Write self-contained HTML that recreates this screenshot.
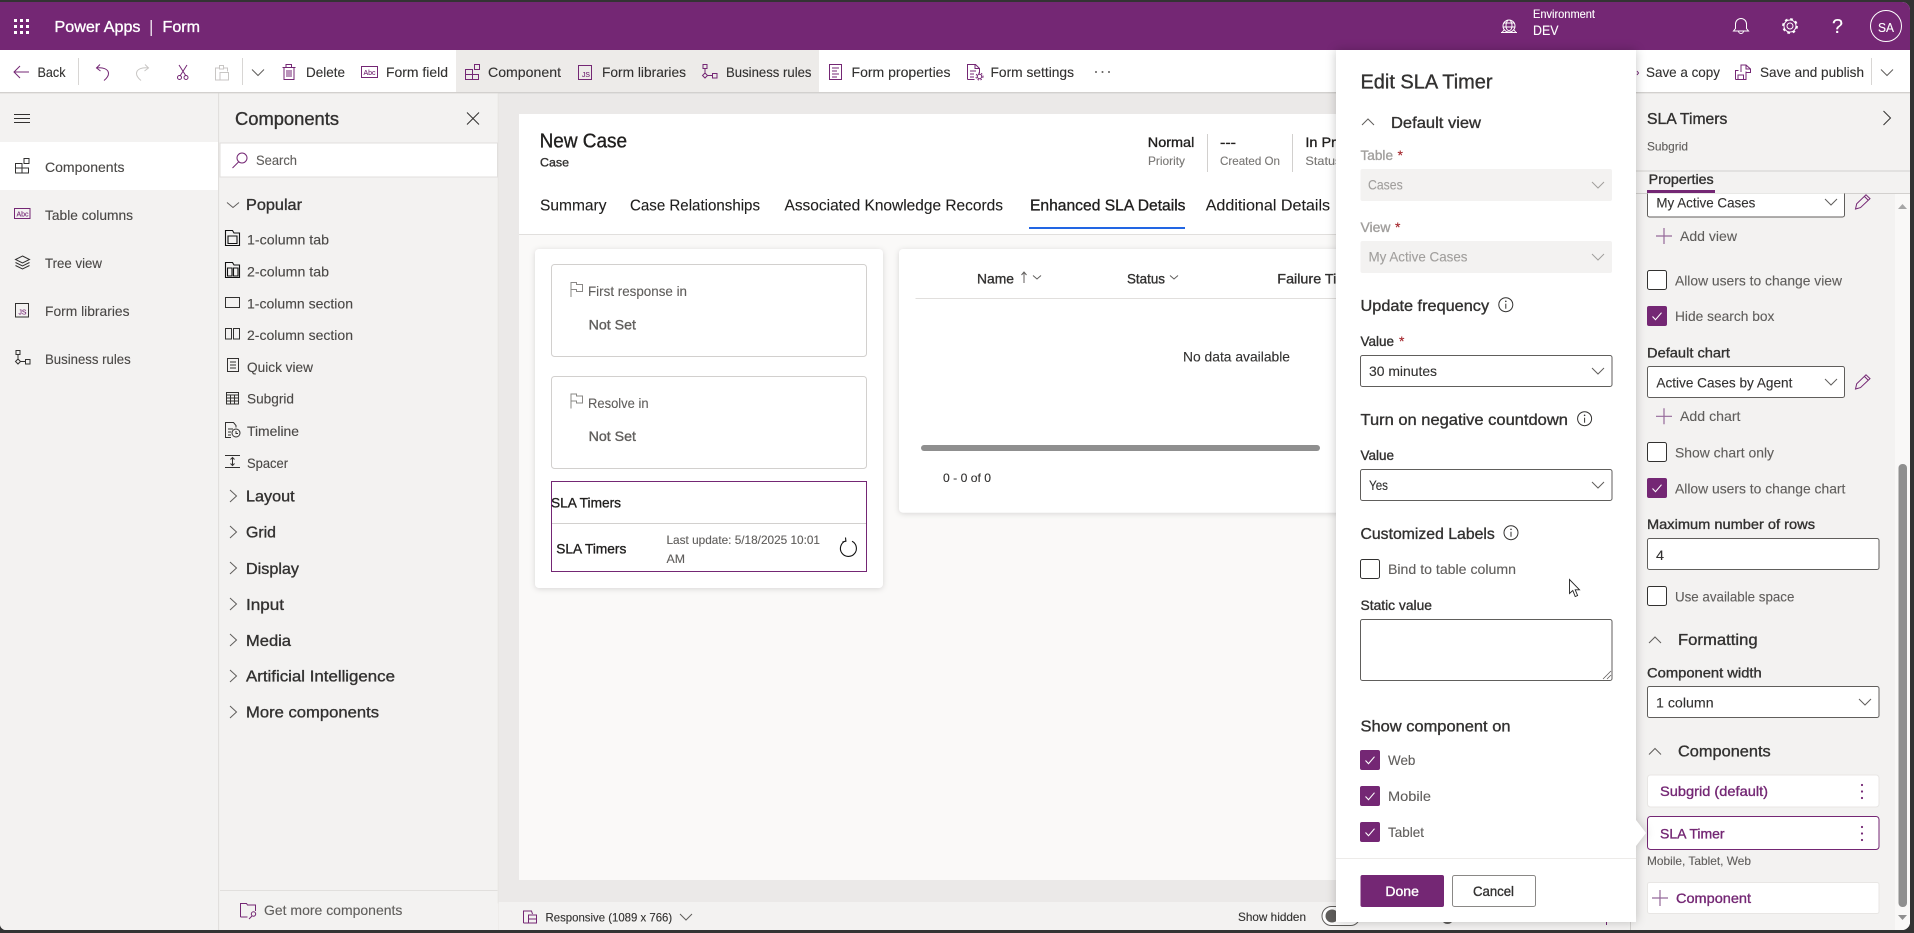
<!DOCTYPE html>
<html lang="en"><head><meta charset="utf-8"><title>Power Apps | Form</title>
<style>
html,body{margin:0;padding:0;width:1914px;height:933px;overflow:hidden;background:#333}
svg{display:block;font-family:"Liberation Sans",sans-serif}
text{fill:currentColor;stroke:currentColor;stroke-width:.12px;white-space:pre;color:#323130;font-size:14px}
.sb{stroke:currentColor;stroke-width:.35px}
.s12{font-size:12px}.s16{font-size:16px}.s18{font-size:18px}.s20{font-size:20px}
.g{color:#605e5c}.i{color:#4a4846}.d{color:#a19f9d}.k{color:#201f1e}.w{color:#fff}.p{color:#742774}.m{color:#797775}.r{color:#a4262c}
.ip{fill:none;stroke:#742774;stroke-width:1}
.id{fill:none;stroke:#323130;stroke-width:1}
.ik{fill:none;stroke:#111;stroke-width:1.1}
.ig{fill:none;stroke:#c8c6c4;stroke-width:1}
.iw{fill:none;stroke:#fff;stroke-width:1}
.ch{fill:none;stroke:#605e5c;stroke-width:1}
.cd{fill:none;stroke:#a19f9d;stroke-width:1}
.pl{fill:none;stroke:#95699a;stroke-width:1.2}
.box{fill:#fff;stroke:#605e5c;stroke-width:1}
.cb{fill:#fff;stroke:#323130;stroke-width:1}
</style></head><body>
<svg width="1914" height="933" viewBox="0 0 1914 933" xmlns="http://www.w3.org/2000/svg">
<defs>
<clipPath id="win"><path d="M0 2H1902a8 8 0 0 1 8 8V922a8 8 0 0 1-8 8H6a6 6 0 0 1-6-6z"/></clipPath>
<clipPath id="clipProps"><rect x="1636" y="193.5" width="260" height="740"/></clipPath>
<g id="cbon"><rect x="0" y="0" width="20" height="20" rx="2" fill="#742774"/><path d="M5.5 10.5l3 3.2 6-7" fill="none" stroke="#fff" stroke-width="1.1"/></g>
<g id="cboff"><rect x=".5" y=".5" width="19" height="19" rx="2" class="cb"/></g>
<g id="kebab"><circle cx="0" cy="0" r="1.1" fill="#742774"/><circle cx="0" cy="6.5" r="1.1" fill="#742774"/><circle cx="0" cy="13" r="1.1" fill="#742774"/></g>
<g id="info"><circle cx="0" cy="0" r="7" fill="none" stroke="#323130"/><path d="M0-1v5" stroke="#323130"/><circle cx="0" cy="-3.4" r=".8" fill="#323130"/></g>
<g id="flag"><path d="M.5 15V.5h5.5v2h6v7h-6v-2H.5" fill="none" stroke="#8a8886"/></g>
<g id="pencil"><path d="M1 15l1.2-5.2L11.5 .8l4 3.8L6 13.6z M10 2.5l4 4" fill="none" stroke="#742774"/></g>
</defs>
<rect width="1914" height="933" fill="#333"/>
<g clip-path="url(#win)">
<!-- base -->
<rect y="2" width="1914" height="931" fill="#ebe9e8"/>
<rect y="2" width="1914" height="48" fill="#742774"/>
<rect y="50" width="1914" height="43" fill="#fff"/>
<rect x="456" y="50" width="363" height="43" fill="#edebe9"/>
<rect y="92" width="1914" height="1.4" fill="#d2d0ce"/>
<!-- header -->
<g fill="#fff"><rect x="14" y="19" width="3" height="3"/><rect x="20" y="19" width="3" height="3"/><rect x="26" y="19" width="3" height="3"/><rect x="14" y="25" width="3" height="3"/><rect x="20" y="25" width="3" height="3"/><rect x="26" y="25" width="3" height="3"/><rect x="14" y="31" width="3" height="3"/><rect x="20" y="31" width="3" height="3"/><rect x="26" y="31" width="3" height="3"/></g>
<text x="54.5" y="32" textLength="86" lengthAdjust="spacingAndGlyphs" class="s16 w sb">Power Apps</text>
<rect x="150.6" y="20" width="1.2" height="16" fill="#fff"/>
<text x="162.5" y="32" textLength="37.5" lengthAdjust="spacingAndGlyphs" class="s16 w sb">Form</text>
<path class="iw" d="M1503 26a6 6 0 1 1 12 0M1503 26a6 6 0 0 0 12 0M1506 26c0-8 6-8 6 0M1506 26c0 6 6 6 6 0M1503.5 23h11M1503.5 27h11M1501 32.5h16M1504 30l-2 2.5M1514 30l2 2.5"/>
<text x="1533" y="18" textLength="62" lengthAdjust="spacingAndGlyphs" class="s12 w">Environment</text>
<text x="1533" y="35" textLength="25.5" lengthAdjust="spacingAndGlyphs" class="w">DEV</text>
<path class="iw" d="M1741 18.5a5.5 5.5 0 0 0-5.5 5.5v4.5l-2 2.5h15l-2-2.5V24a5.5 5.5 0 0 0-5.5-5.5zM1738.5 31a2.5 2.5 0 0 0 5 0"/>
<circle cx="1790" cy="26" r="3" class="iw"/><circle cx="1790" cy="26" r="6" class="iw"/><circle cx="1790" cy="26" r="7" fill="none" stroke="#fff" stroke-width="1.8" stroke-dasharray="2.7 2.8"/>
<text x="1832" y="33" textLength="11" lengthAdjust="spacingAndGlyphs" class="s20 w">?</text>
<circle cx="1886" cy="26" r="15.5" class="iw"/>
<text x="1878" y="32" textLength="16" lengthAdjust="spacingAndGlyphs" class="w" style="font-size:13px">SA</text>
<!-- toolbar -->
<path class="ip" d="M29 72H14M20 66l-6 6 6 6"/>
<text x="37.5" y="77" textLength="28" lengthAdjust="spacingAndGlyphs">Back</text>
<rect x="78" y="58" width="1" height="27" fill="#d8d6d4"/>
<path class="ip" d="M100 64.5l-3.5 3.5 4 3M96.5 68c6-1 12 1 12 5.5 0 3-2 5-4.5 7"/>
<path class="ig" d="M145 64.5l3.5 3.5-4 3M148.5 68c-6-1-12 1-12 5.5 0 3 2 5 4.5 7"/>
<path class="ip" d="M179 65l7 11M187 65l-7 11"/><circle cx="179.5" cy="77.5" r="2" class="ip"/><circle cx="186" cy="77.5" r="2" class="ip"/>
<path class="ig" d="M219 68h-3.5v12h4M224 68h3.5v3.5M219.5 65.5h4v3.5h-4zM220 72.5h8.5v7.5H220z"/>
<rect x="242" y="58" width="1" height="27" fill="#d8d6d4"/>
<path class="ch" d="M252 69.5l6 6 6-6"/>
<path class="ip" d="M282.5 67.5h13M286 67.5v-3h5.5v3M284 67.5h10v12h-10zM287 70v7M289 70v7M291 70v7"/>
<text x="306" y="77" textLength="39" lengthAdjust="spacingAndGlyphs">Delete</text>
<rect x="361.5" y="66.5" width="16" height="11" class="ip"/><text x="363.5" y="75" textLength="12" lengthAdjust="spacingAndGlyphs" class="p" style="font-size:7px">Abc</text>
<text x="386" y="77" textLength="62" lengthAdjust="spacingAndGlyphs">Form field</text>
<path class="ip" d="M465.5 69.5h7v10h-7zM465.5 74.5h13v5h-6M474.5 64.5h5v5h-5z"/>
<text x="488" y="77" textLength="73" lengthAdjust="spacingAndGlyphs">Component</text>
<rect x="578.5" y="65.5" width="13" height="14" class="ip"/><text x="582" y="77" textLength="8" lengthAdjust="spacingAndGlyphs" class="p" style="font-size:7px">JS</text>
<text x="602" y="77" textLength="84" lengthAdjust="spacingAndGlyphs">Form libraries</text>
<path class="ip" d="M703 64.5h4v4h-4zM705 68.5V73M705 73l2.5 2.5-2.5 2.5-2.5-2.5zM707.5 75.5h5M712.5 73.5h4.500v4.5h-4.5z"/>
<text x="726" y="77" textLength="85.500" lengthAdjust="spacingAndGlyphs">Business rules</text>
<path class="ip" d="M829.5 64.5h12v15h-12zM832 68h7M832 71h5M832 74h7M832 77h5"/>
<text x="851.5" y="77" textLength="99" lengthAdjust="spacingAndGlyphs">Form properties</text>
<path class="ip" d="M967.5 79.5v-15h8l4 4v5M975 64.5v4h4M970 71h6M970 74h4M970 77h4M967.5 79.5h7"/><circle cx="979.5" cy="76.5" r="2.2" class="ip"/><circle cx="979.5" cy="76.5" r="3.5" fill="none" stroke="#742774" stroke-dasharray="1.5 1.5"/>
<text x="990.5" y="77" textLength="83.5" lengthAdjust="spacingAndGlyphs">Form settings</text>
<g fill="#605e5c"><circle cx="1096" cy="72" r="1"/><circle cx="1102.5" cy="72" r="1"/><circle cx="1109" cy="72" r="1"/></g>
<path class="ip" d="M1637 71l1.5 2-1.5 2"/>
<text x="1646" y="77" textLength="74" lengthAdjust="spacingAndGlyphs">Save a copy</text>
<path class="ip" d="M1735.5 79.5v-9h3M1735.5 79.5h10.5v-8M1738 75h5.5v4.5H1738zM1741 72v-7h5l4.5 4v3.5H1746M1746 65v4h4.5"/>
<text x="1760" y="77" textLength="104" lengthAdjust="spacingAndGlyphs">Save and publish</text>
<rect x="1871" y="58" width="1" height="27" fill="#d8d6d4"/>
<path class="ch" d="M1881 69.5l6 6 6-6"/>
<!-- left nav -->
<rect x="0" y="93.4" width="218" height="840" fill="#f3f2f1"/>
<rect x="218" y="93.4" width="1.2" height="840" fill="#e1dfdd"/>
<path class="id" d="M14 114.5h16M14 118.500h16M14 122.500h16"/>
<rect x="0" y="142" width="218" height="48" fill="#fff"/>
<path class="id" d="M15.5 163.5h6.5v9.5h-6.5zM15.5 168h13v5h-6.5M24 158.5h5v5h-5zM22 163.5v4.5"/>
<text x="45" y="172" textLength="79.5" lengthAdjust="spacingAndGlyphs" class="i">Components</text>
<rect x="14.5" y="208.5" width="15.5" height="10" class="ip"/><text x="16.5" y="216.5" textLength="12" lengthAdjust="spacingAndGlyphs" class="p" style="font-size:7px">Abc</text>
<text x="45" y="220" textLength="88" lengthAdjust="spacingAndGlyphs" class="i">Table columns</text>
<path class="id" d="M22.5 256l7 3.5-7 3.5-7-3.5zM15.5 262.5l7 3.5 7-3.5M15.5 265.5l7 3.5 7-3.5"/>
<text x="45" y="268" textLength="57" lengthAdjust="spacingAndGlyphs" class="i">Tree view</text>
<rect x="15.5" y="303.5" width="13" height="13.5" class="id"/><text x="18.5" y="314.5" textLength="8" lengthAdjust="spacingAndGlyphs" class="p" style="font-size:7px">JS</text>
<text x="45" y="316" textLength="84.5" lengthAdjust="spacingAndGlyphs" class="i">Form libraries</text>
<path class="id" d="M16 350.5h4v4h-4zM18 354.5V359M18 359l2.5 2.5-2.5 2.5-2.5-2.5zM20.5 361.5h5M25.5 359.5h4.5v4.5h-4.5z"/>
<text x="45" y="364" textLength="85.7" lengthAdjust="spacingAndGlyphs" class="i">Business rules</text>
<!-- components panel -->
<rect x="219.2" y="93.4" width="278.8" height="840" fill="#f3f2f1"/>
<rect x="497.7" y="93.4" width="1" height="810" fill="#e6e4e2"/>
<text x="235" y="125" textLength="104" lengthAdjust="spacingAndGlyphs" class="s18 sb">Components</text>
<path class="id" d="M467 112.5l12 12M479 112.5l-12 12"/>
<rect x="220" y="143" width="277.5" height="34" fill="#fff" stroke="#e1dfdd"/>
<circle cx="242" cy="158" r="5" class="ip"/><path class="ip" d="M238.5 162l-6 6"/>
<text x="256" y="165" textLength="41" lengthAdjust="spacingAndGlyphs" class="g">Search</text>
<path class="ch" d="M227 202.5l6 5 6-5"/>
<text x="246" y="210" textLength="56" lengthAdjust="spacingAndGlyphs" class="s16 sb">Popular</text>
<path class="ik" d="M225.5 245.5v-15h7l1.5 2.500h5.500v12.500zM228 236h9v7.500h-9z"/>
<text x="247" y="244.3" textLength="82" lengthAdjust="spacingAndGlyphs" class="i">1-column tab</text>
<path class="ik" d="M225.5 277.5v-15h7l1.5 2.5h5.5v12.5zM227.5 268h4.5v8h-4.5zM233.5 268h4.5v8h-4.5z"/>
<text x="247" y="276.3" textLength="82" lengthAdjust="spacingAndGlyphs" class="i">2-column tab</text>
<rect x="225.5" y="297.5" width="14" height="10" class="id"/>
<text x="247" y="308.3" textLength="106" lengthAdjust="spacingAndGlyphs" class="i">1-column section</text>
<path class="id" d="M225.5 328.5h6v10.5h-6zM233.5 328.5h6v10.5h-6z"/>
<text x="247" y="340" textLength="106" lengthAdjust="spacingAndGlyphs" class="i">2-column section</text>
<path class="id" d="M227.5 358.5h11v13h-11zM230 362h6M230 365h6M230 368h6"/>
<text x="247" y="372" textLength="66" lengthAdjust="spacingAndGlyphs" class="i">Quick view</text>
<path class="id" d="M226.5 392.5h12v11.5h-12zM226.5 395h12M226.5 398h12M226.5 401h12M230.5 395v9M234.5 395v9"/>
<text x="247" y="403.5" textLength="47" lengthAdjust="spacingAndGlyphs" class="i">Subgrid</text>
<path class="id" d="M231 437.5h-5.5v-15h8l2.5 3v2M228 429h5M228 432h3M228 435h3"/><circle cx="236" cy="433" r="4" class="id"/><path class="id" d="M236 431v2.5h2"/>
<text x="247" y="436" textLength="52" lengthAdjust="spacingAndGlyphs" class="i">Timeline</text>
<path class="id" d="M225 455.5h15M225 467.5h15M232.5 458v7M230.5 459.5l2-2 2 2M230.5 463.5l2 2 2-2"/>
<text x="247" y="468" textLength="41" lengthAdjust="spacingAndGlyphs" class="i">Spacer</text>
<path class="ch" d="M230 490l6.5 6-6.5 6"/>
<text x="246" y="501.7" textLength="48.6" lengthAdjust="spacingAndGlyphs" class="s16 sb">Layout</text>
<path class="ch" d="M230 526l6.5 6-6.5 6"/>
<text x="246" y="537.7" textLength="30" lengthAdjust="spacingAndGlyphs" class="s16 sb">Grid</text>
<path class="ch" d="M230 562l6.5 6-6.5 6"/>
<text x="246" y="574" textLength="53" lengthAdjust="spacingAndGlyphs" class="s16 sb">Display</text>
<path class="ch" d="M230 598l6.5 6-6.5 6"/>
<text x="246" y="610" textLength="38" lengthAdjust="spacingAndGlyphs" class="s16 sb">Input</text>
<path class="ch" d="M230 634l6.5 6-6.5 6"/>
<text x="246" y="646" textLength="45" lengthAdjust="spacingAndGlyphs" class="s16 sb">Media</text>
<path class="ch" d="M230 670l6.5 6-6.5 6"/>
<text x="246" y="681.7" textLength="149" lengthAdjust="spacingAndGlyphs" class="s16 sb">Artificial Intelligence</text>
<path class="ch" d="M230 706l6.5 6-6.5 6"/>
<text x="246" y="717.7" textLength="133" lengthAdjust="spacingAndGlyphs" class="s16 sb">More components</text>
<rect x="220" y="890" width="277.5" height="1" fill="#e1dfdd"/>
<path class="ip" d="M240.5 917v-13.500h6l1 1.500h8v6M240.5 917h7"/><circle cx="253.5" cy="914" r="2.2" class="ip"/><path class="ip" d="M252 916l-3 3"/>
<text x="264" y="915" textLength="138.4" lengthAdjust="spacingAndGlyphs" class="g">Get more components</text>
<!-- form -->
<rect x="519" y="114" width="900" height="766" fill="#faf9f8"/>
<rect x="519" y="114" width="900" height="120" fill="#fff"/>
<rect x="519" y="234" width="900" height="1" fill="#e1dfdd"/>
<text x="539.6" y="147.7" textLength="87.5" lengthAdjust="spacingAndGlyphs" class="s20 sb k">New Case</text>
<text x="540" y="166.7" textLength="29" lengthAdjust="spacingAndGlyphs" class="s12 sb">Case</text>
<text x="1147.8" y="147" textLength="46.5" lengthAdjust="spacingAndGlyphs" class="sb k">Normal</text>
<text x="1148" y="165" textLength="37" lengthAdjust="spacingAndGlyphs" class="s12 m">Priority</text>
<rect x="1207" y="134" width="1" height="38" fill="#d2d0ce"/>
<text x="1220" y="147" textLength="16" lengthAdjust="spacingAndGlyphs" class="sb k">---</text>
<text x="1220" y="165" textLength="60" lengthAdjust="spacingAndGlyphs" class="s12 m">Created On</text>
<rect x="1292" y="134" width="1" height="38" fill="#d2d0ce"/>
<text x="1305.4" y="147" textLength="74" lengthAdjust="spacingAndGlyphs" class="sb k">In Progress</text>
<text x="1305.4" y="165" textLength="36" lengthAdjust="spacingAndGlyphs" class="s12 m">Status</text>
<text x="540" y="210.7" textLength="66.5" lengthAdjust="spacingAndGlyphs" class="s16 k">Summary</text>
<text x="630" y="210.7" textLength="130" lengthAdjust="spacingAndGlyphs" class="s16 k">Case Relationships</text>
<text x="784.5" y="210.7" textLength="218.5" lengthAdjust="spacingAndGlyphs" class="s16 k">Associated Knowledge Records</text>
<text x="1030" y="210.7" textLength="155.5" lengthAdjust="spacingAndGlyphs" class="s16 sb k">Enhanced SLA Details</text>
<rect x="1029" y="227" width="156" height="2" fill="#2266e3"/>
<text x="1205.7" y="210.7" textLength="124.4" lengthAdjust="spacingAndGlyphs" class="s16 k">Additional Details</text>
<!-- cards -->
<g style="filter:drop-shadow(0 1px 3px rgba(0,0,0,.14))">
<rect x="535" y="249" width="348" height="339" rx="4" fill="#fff"/>
<rect x="899" y="249" width="500" height="263.7" rx="4" fill="#fff"/>
</g>
<rect x="551.5" y="264.5" width="315" height="92" rx="3" fill="#fff" stroke="#d2d0ce"/>
<use href="#flag" x="570.5" y="282"/>
<text x="588" y="296" textLength="99" lengthAdjust="spacingAndGlyphs" class="g">First response in</text>
<text x="588.6" y="329.3" textLength="47.4" lengthAdjust="spacingAndGlyphs" class="sb g">Not Set</text>
<rect x="551.5" y="376.5" width="315" height="92" rx="3" fill="#fff" stroke="#d2d0ce"/>
<use href="#flag" x="570.5" y="393.5"/>
<text x="588" y="408" textLength="60.6" lengthAdjust="spacingAndGlyphs" class="g">Resolve in</text>
<text x="588.6" y="441" textLength="47.4" lengthAdjust="spacingAndGlyphs" class="sb g">Not Set</text>
<rect x="551.5" y="481.5" width="315" height="90" fill="#fff" stroke="#742774"/>
<text x="551" y="507.3" textLength="70" lengthAdjust="spacingAndGlyphs" class="sb k">SLA Timers</text>
<rect x="552" y="523" width="314" height="1" fill="#d2d0ce"/>
<text x="556.3" y="553.3" textLength="70" lengthAdjust="spacingAndGlyphs" class="sb k">SLA Timers</text>
<text x="666.5" y="544" textLength="153.5" lengthAdjust="spacingAndGlyphs" class="s12 g">Last update: 5/18/2025 10:01</text>
<text x="666.5" y="563" textLength="18.5" lengthAdjust="spacingAndGlyphs" class="s12 g">AM</text>
<path d="M845.5 541a8 8 0 1 0 6.5 .3M845.500 537.500l.4 3.700-3.500 .8" fill="none" stroke="#111" stroke-width="1.1"/>
<text x="977" y="283.3" textLength="37" lengthAdjust="spacingAndGlyphs" class="sb">Name</text>
<path class="ch" d="M1024 283v-11M1021.5 275l2.5-3 2.5 3M1033 275.5l4 3.5 4-3.5"/>
<text x="1127" y="283.3" textLength="38" lengthAdjust="spacingAndGlyphs" class="sb">Status</text>
<path class="ch" d="M1170 275.5l4 3.5 4-3.5"/>
<text x="1277.3" y="283.3" textLength="79" lengthAdjust="spacingAndGlyphs" class="sb">Failure Time</text>
<rect x="915.5" y="298" width="480" height="1" fill="#e1dfdd"/>
<text x="1183" y="361.7" textLength="107" lengthAdjust="spacingAndGlyphs">No data available</text>
<rect x="921" y="445" width="399" height="6" rx="3" fill="#8f8f8f"/>
<text x="943" y="482" textLength="48" lengthAdjust="spacingAndGlyphs" class="s12">0 - 0 of 0</text>
<!-- status bar -->
<rect x="498.7" y="902" width="1140" height="30" fill="#f3f2f1"/>
<path class="ip" d="M523.5 923v-12h8l1 3M523.5 923h13v-8h-8v8M528.5 919h8"/>
<text x="545.5" y="921.7" textLength="126.7" lengthAdjust="spacingAndGlyphs" class="s12">Responsive (1089 x 766)</text>
<path class="ch" d="M680 914l6 6 6-6"/>
<text x="1238" y="921" textLength="68" lengthAdjust="spacingAndGlyphs" class="s12">Show hidden</text>
<rect x="1322" y="906.5" width="38" height="19" rx="9.5" fill="#fff" stroke="#605e5c"/>
<circle cx="1332" cy="916" r="6.5" fill="#605e5c"/>
<circle cx="1447.5" cy="918" r="6" fill="#605e5c"/>
<rect x="1606" y="920" width="1" height="5" fill="#742774"/>
<rect x="1630" y="922" width="1" height="10" fill="#d2d0ce"/>
<!-- right panel -->
<rect x="1636" y="93.4" width="278" height="840" fill="#f3f2f1"/>
<rect x="1895" y="194" width="19" height="740" fill="#f9f8f7"/>
<text x="1647" y="124" textLength="80.4" lengthAdjust="spacingAndGlyphs" class="s16 sb">SLA Timers</text>
<path class="id" d="M1883.5 111l7 7-7 7"/>
<text x="1647" y="150.7" textLength="41" lengthAdjust="spacingAndGlyphs" class="s12 g">Subgrid</text>
<rect x="1636" y="170.5" width="278" height="1" fill="#d2d0ce"/>
<text x="1648.7" y="184" textLength="65" lengthAdjust="spacingAndGlyphs" class="sb">Properties</text>
<rect x="1636" y="193" width="278" height="1" fill="#d2d0ce"/>
<rect x="1647" y="190" width="68" height="3" fill="#742774"/>
<path d="M1902.5 204l4.5 5h-9z" fill="#a6a6a6"/>
<rect x="1898.5" y="464" width="8.5" height="443" rx="4" fill="#8f8f8f"/>
<path d="M1902.5 920l4.5-5h-9z" fill="#8f8f8f"/>
<g clip-path="url(#clipProps)">
<rect x="1647.5" y="170" width="197" height="47" rx="2" class="box"/>
</g>
<text x="1656.4" y="207.3" textLength="99" lengthAdjust="spacingAndGlyphs">My Active Cases</text>
<path class="ch" d="M1825 199l6 6 6-6"/>
<use href="#pencil" x="1854.5" y="194"/>
<path class="pl" d="M1664 228v16M1656 236h16"/>
<text x="1680" y="241" textLength="57" lengthAdjust="spacingAndGlyphs" class="g">Add view</text>
<use href="#cboff" x="1647" y="270"/>
<text x="1675" y="285.7" textLength="167" lengthAdjust="spacingAndGlyphs" class="g">Allow users to change view</text>
<use href="#cbon" x="1647" y="306"/>
<text x="1675" y="321" textLength="99.4" lengthAdjust="spacingAndGlyphs" class="g">Hide search box</text>
<text x="1647" y="357.3" textLength="83" lengthAdjust="spacingAndGlyphs" class="sb">Default chart</text>
<rect x="1647.5" y="366.5" width="197" height="31" rx="2" class="box"/>
<text x="1656.4" y="387.3" textLength="136" lengthAdjust="spacingAndGlyphs">Active Cases by Agent</text>
<path class="ch" d="M1825 379l6 6 6-6"/>
<use href="#pencil" x="1854.5" y="374"/>
<path class="pl" d="M1664 408.3v16M1656 416.3h16"/>
<text x="1680" y="421" textLength="60.5" lengthAdjust="spacingAndGlyphs" class="g">Add chart</text>
<use href="#cboff" x="1647" y="442"/>
<text x="1675" y="457.3" textLength="99" lengthAdjust="spacingAndGlyphs" class="g">Show chart only</text>
<use href="#cbon" x="1647" y="478"/>
<text x="1675" y="493.3" textLength="170.4" lengthAdjust="spacingAndGlyphs" class="g">Allow users to change chart</text>
<text x="1647" y="529" textLength="168" lengthAdjust="spacingAndGlyphs" class="sb">Maximum number of rows</text>
<rect x="1647.5" y="538.5" width="231.5" height="31" rx="2" class="box"/>
<text x="1656" y="560" textLength="8" lengthAdjust="spacingAndGlyphs">4</text>
<use href="#cboff" x="1647" y="586"/>
<text x="1675" y="601.3" textLength="119.4" lengthAdjust="spacingAndGlyphs" class="g">Use available space</text>
<path class="ch" d="M1649 643l6-6 6 6"/>
<text x="1678" y="645" textLength="79.6" lengthAdjust="spacingAndGlyphs" class="s16 sb">Formatting</text>
<text x="1647" y="677.3" textLength="114.7" lengthAdjust="spacingAndGlyphs" class="sb">Component width</text>
<rect x="1647.5" y="686.5" width="231.5" height="31" rx="2" class="box"/>
<text x="1656" y="707.3" textLength="57.6" lengthAdjust="spacingAndGlyphs">1 column</text>
<path class="ch" d="M1859 699l6 6 6-6"/>
<path class="ch" d="M1649 754.5l6-6 6 6"/>
<text x="1678" y="756.7" textLength="92.7" lengthAdjust="spacingAndGlyphs" class="s16 sb">Components</text>
<rect x="1647.5" y="775" width="231.5" height="32" rx="3" fill="#fff" stroke="#e8e6e4"/>
<text x="1660" y="796" textLength="108" lengthAdjust="spacingAndGlyphs" class="sb p">Subgrid (default)</text>
<use href="#kebab" x="1862" y="785"/>
<rect x="1647.5" y="816.5" width="231.5" height="33" rx="3" fill="#fff" stroke="#742774"/>
<text x="1660" y="838.3" textLength="64.6" lengthAdjust="spacingAndGlyphs" class="sb p">SLA Timer</text>
<use href="#kebab" x="1862" y="827"/>
<text x="1647" y="865" textLength="104" lengthAdjust="spacingAndGlyphs" class="s12 g">Mobile, Tablet, Web</text>
<rect x="1647.5" y="882.5" width="231.5" height="31" rx="2" fill="#fff" stroke="#e8e6e4"/>
<path class="pl" d="M1660 890v16M1652 898h16"/>
<text x="1676" y="903" textLength="75" lengthAdjust="spacingAndGlyphs" class="sb p">Component</text>
<!-- flyout -->
<path d="M1336 50H1636V820l10 13-10 13V922H1336z" fill="#fff" style="filter:drop-shadow(0 0 5px rgba(0,0,0,.22))"/>
<text x="1360.5" y="88.3" textLength="132" lengthAdjust="spacingAndGlyphs" class="s20 sb">Edit SLA Timer</text>
<path class="ch" d="M1362 125l6-6 6 6"/>
<text x="1391" y="128" textLength="90" lengthAdjust="spacingAndGlyphs" class="s16 sb">Default view</text>
<text x="1360.5" y="160" textLength="32.5" lengthAdjust="spacingAndGlyphs" class="sb d">Table</text>
<text x="1397.5" y="160" class="r">*</text>
<rect x="1360.5" y="169" width="251.5" height="32" rx="2" fill="#f3f2f1"/>
<text x="1368" y="189.3" textLength="34.7" lengthAdjust="spacingAndGlyphs" class="d">Cases</text>
<path class="cd" d="M1592 182l6 6 6-6"/>
<text x="1360.5" y="232" textLength="30" lengthAdjust="spacingAndGlyphs" class="sb d">View</text>
<text x="1395" y="232" class="r">*</text>
<rect x="1360.5" y="241" width="251.5" height="32" rx="2" fill="#f3f2f1"/>
<text x="1368.5" y="261.7" textLength="99" lengthAdjust="spacingAndGlyphs" class="d">My Active Cases</text>
<path class="cd" d="M1592 254l6 6 6-6"/>
<text x="1360.5" y="311" textLength="128.6" lengthAdjust="spacingAndGlyphs" class="s16 sb">Update frequency</text>
<use href="#info" x="1505.8" y="304.7"/>
<text x="1360.5" y="346" textLength="33.5" lengthAdjust="spacingAndGlyphs" class="sb">Value</text>
<text x="1399" y="346" class="r">*</text>
<rect x="1360.5" y="355.5" width="251.5" height="31" rx="2" class="box"/>
<text x="1369" y="376" textLength="68" lengthAdjust="spacingAndGlyphs">30 minutes</text>
<path class="ch" d="M1592 368l6 6 6-6"/>
<text x="1360.5" y="425" textLength="207.4" lengthAdjust="spacingAndGlyphs" class="s16 sb">Turn on negative countdown</text>
<use href="#info" x="1584.6" y="418.7"/>
<text x="1360.5" y="460" textLength="33.5" lengthAdjust="spacingAndGlyphs" class="sb">Value</text>
<rect x="1360.5" y="469.5" width="251.5" height="31" rx="2" class="box"/>
<text x="1369" y="490" textLength="19" lengthAdjust="spacingAndGlyphs">Yes</text>
<path class="ch" d="M1592 482l6 6 6-6"/>
<text x="1360.5" y="539" textLength="134.3" lengthAdjust="spacingAndGlyphs" class="s16 sb">Customized Labels</text>
<use href="#info" x="1511" y="532.7"/>
<use href="#cboff" x="1360" y="559"/>
<text x="1388" y="574" textLength="128" lengthAdjust="spacingAndGlyphs" class="g">Bind to table column</text>
<text x="1360.5" y="610" textLength="71.5" lengthAdjust="spacingAndGlyphs" class="sb">Static value</text>
<rect x="1360.5" y="619.5" width="251.5" height="61" rx="2" class="box"/>
<path d="M1603 679l8-8M1607 679l4-4" fill="none" stroke="#605e5c" stroke-width=".8"/>
<text x="1360.5" y="731.7" textLength="150" lengthAdjust="spacingAndGlyphs" class="s16 sb">Show component on</text>
<use href="#cbon" x="1360" y="750"/>
<text x="1388" y="765" textLength="27.4" lengthAdjust="spacingAndGlyphs" class="g">Web</text>
<use href="#cbon" x="1360" y="786"/>
<text x="1388" y="801" textLength="43" lengthAdjust="spacingAndGlyphs" class="g">Mobile</text>
<use href="#cbon" x="1360" y="822"/>
<text x="1388" y="837" textLength="36" lengthAdjust="spacingAndGlyphs" class="g">Tablet</text>
<rect x="1336" y="858" width="300" height="1" fill="#edebe9"/>
<rect x="1360.5" y="875" width="83.5" height="32" rx="2" fill="#742774"/>
<text x="1385.4" y="896" textLength="33.5" lengthAdjust="spacingAndGlyphs" class="w sb">Done</text>
<rect x="1452.5" y="875.5" width="83" height="31" rx="2" fill="#fff" stroke="#8a8886"/>
<text x="1473" y="896" textLength="41" lengthAdjust="spacingAndGlyphs" class="sb">Cancel</text>
<!-- cursor -->
<path d="M1569.5 579.5v14l3.3-3 2.4 6 2.4-1-2.400-5.700h4.300z" fill="#fff" stroke="#222" stroke-width=".9"/>
</g>
</svg>
</body></html>
